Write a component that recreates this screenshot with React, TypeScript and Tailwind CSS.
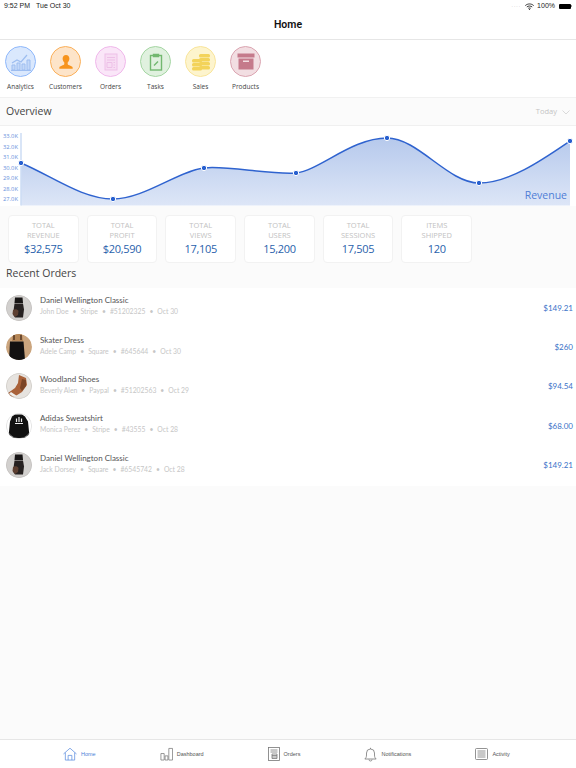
const font = "[font-family:'Open_Sans',sans-serif]";

function Circle({ border, bg, children }: { border: string; bg: string; children: React.ReactNode }) {
  return (
    <div className={`flex h-[31px] w-[31px] items-center justify-center rounded-full border ${border} ${bg}`}>
      {children}
    </div>
  );
}

const shortcuts = [
  {
    label: "Analytics", border: "border-[#8fb8fb]", bg: "bg-[#dae8fd]",
    icon: (
      <svg width="22" height="20" viewBox="0 0 22 20" fill="#c3d8f8" stroke="#9dbdf0" strokeWidth="1">
        <path d="M2 18v-5h3v5zM7 18v-7h3v7zM12 18v-6h3v6zM17 18V8h3v10zM1 18.500h20" />
        <path d="M2 11l5-3 4 2 6-7" strokeWidth="1.200" fill="none" />
      </svg>
    ),
  },
  {
    label: "Customers", border: "border-[#fbb05a]", bg: "bg-[#fde4c9]",
    icon: (
      <svg width="16" height="18" viewBox="0 0 18 18" fill="#f7941d">
        <path d="M9 1c2.400 0 3.800 1.800 3.800 4.200 0 1.900-.9 3.600-1.900 4.400v1.600c0 .8 1.300 1.200 3 1.900 1.400.6 2.600 1 2.600 2.400v1H1.500v-1c0-1.400 1.200-1.800 2.600-2.400 1.700-.7 3-1.100 3-1.900V9.600C6.100 8.800 5.200 7.100 5.200 5.200 5.200 2.800 6.600 1 9 1z" />
      </svg>
    ),
  },
  {
    label: "Orders", border: "border-[#f0b8eb]", bg: "bg-[#fae6f8]",
    icon: (
      <svg width="14" height="18" viewBox="0 0 14 18" fill="none" stroke="#edc0e7" strokeWidth="1">
        <rect x="1" y="1" width="12" height="16" fill="#f7dcf3" />
        <path d="M3 4.500h8M3 7h8M3 9.500h5v5H3zM9.500 9.500H11M9.500 12H11M9.500 14.500H11" />
      </svg>
    ),
  },
  {
    label: "Tasks", border: "border-[#a5d6a3]", bg: "bg-[#e0f1df]",
    icon: (
      <svg width="14" height="18" viewBox="0 0 14 18" fill="none" stroke="#72b870" strokeWidth="1.400">
        <rect x="1.500" y="2.500" width="11" height="14.500" />
        <path d="M4.500 1.500h5v2h-5zM5 12.500l4-4" />
      </svg>
    ),
  },
  {
    label: "Sales", border: "border-[#f9e59c]", bg: "bg-[#fdf4cd]",
    icon: (
      <svg width="20" height="18" viewBox="0 0 20 18" fill="#f3d35a">
        <rect x="8" y="1" width="11" height="3.500" rx="1.500" />
        <rect x="8" y="5" width="11" height="3.500" rx="1.500" />
        <rect x="8" y="9" width="11" height="3.500" rx="1.500" />
        <rect x="8" y="13" width="11" height="3.500" rx="1.500" />
        <rect x="1" y="6" width="10" height="3.500" rx="1.500" />
        <rect x="1" y="10" width="10" height="3.500" rx="1.500" />
        <rect x="1" y="14" width="10" height="3.500" rx="1.500" />
      </svg>
    ),
  },
  {
    label: "Products", border: "border-[#dba5b1]", bg: "bg-[#f2dee2]",
    icon: (
      <svg width="18" height="17" viewBox="0 0 18 17" fill="#c57a8b">
        <rect x="0.500" y="0.500" width="17" height="4" />
        <path d="M1.500 5.500h15V16.500h-15zM6 7.500v1.500h6V7.500z" fillRule="evenodd" />
      </svg>
    ),
  },
];

const stats = [
  ["TOTAL", "REVENUE", "$32,575"],
  ["TOTAL", "PROFIT", "$20,590"],
  ["TOTAL", "VIEWS", "17,105"],
  ["TOTAL", "USERS", "15,200"],
  ["TOTAL", "SESSIONS", "17,505"],
  ["ITEMS", "SHIPPED", "120"],
];

function Avatar({ kind }: { kind: number }) {
  const common = "h-[26px] w-[26px] shrink-0 rounded-full";
  if (kind === 0)
    return (
      <svg className={common} viewBox="0 0 26 26">
        <circle cx="13" cy="13" r="13" fill="#d2d0ce" />
        <path d="M9 2.500h7.500l.5 5.500H8.500z" fill="#171515" />
        <path d="M8.500 8.500h8.500l1 6-1 8H9l-2-3z" fill="#262121" />
        <path d="M7 15c2-1.500 4.500-1 5.500 1l-.5 4-3 2-2.500-3z" fill="#5d3f31" />
        <circle cx="13" cy="13" r="12.700" fill="none" stroke="#bdbbb9" strokeWidth=".6" />
      </svg>
    );
  if (kind === 1)
    return (
      <svg className={common} viewBox="0 0 26 26">
        <circle cx="13" cy="13" r="13" fill="#cba57e" />
        <path d="M7 0h9l1 7H6z" fill="#b58657" />
        <path d="M4 7.500h13.500l1.500 18.500H3z" fill="#131111" />
        <path d="M7 1h2v5H7zM14 1h2v5h-2z" fill="#6b4a30" />
      </svg>
    );
  if (kind === 2)
    return (
      <svg className={common} viewBox="0 0 26 26">
        <circle cx="13" cy="13" r="13" fill="#e6e3df" />
        <path d="M13 2l7 3 1 7-5 7-8 5-5-1-1-3 7-5 3-5z" fill="#a9623a" />
        <path d="M16 6l4 1v6l-4 5-2-3z" fill="#7a4426" />
        <path d="M3 21l5 3 3-1-6-4z" fill="#f0efec" />
        <circle cx="13" cy="13" r="12.700" fill="none" stroke="#c2bfbb" strokeWidth=".6" />
      </svg>
    );
  return (
    <svg className={common} viewBox="0 0 26 26">
      <circle cx="13" cy="13" r="13" fill="#ffffff" />
      <path d="M9 1.500h7l3 2 3 5 1.500 15h-3.500l-.5 1.500H6.500L6 23.500H2.500L4 8.500l2-5z" fill="#111" />
      <path d="M13 4v5M10.500 5.500v3.500M15.500 5.500v3.500M9 10.500h8" stroke="#eee" strokeWidth="1.200" />
      <circle cx="13" cy="13" r="12.700" fill="none" stroke="#cfcfcf" strokeWidth=".6" />
    </svg>
  );
}

const orders = [
  [0, "Daniel Wellington Classic", ["John Doe", "Stripe", "#51202325", "Oct 30"], "$149.21"],
  [1, "Skater Dress", ["Adele Camp", "Square", "#645644", "Oct 30"], "$260"],
  [2, "Woodland Shoes", ["Beverly Alen", "Paypal", "#51202563", "Oct 29"], "$94.54"],
  [3, "Adidas Sweatshirt", ["Monica Perez", "Stripe", "#43555", "Oct 28"], "$68.00"],
  [0, "Daniel Wellington Classic", ["Jack Dorsey", "Square", "#6545742", "Oct 28"], "$149.21"],
] as const;

const tabs = [
  {
    label: "Home", active: true,
    icon: (
      <svg width="14" height="14" viewBox="0 0 15 14" fill="none" stroke="#5b8ddf" strokeWidth=".8">
        <path d="M.5 7L7.500.8 14.500 7M2.500 5.500V13.500h10V5.500M5.500 13.500V8.500h4v5" />
      </svg>
    ),
  },
  {
    label: "Dashboard",
    icon: (
      <svg width="13" height="14" viewBox="0 0 14 14" fill="none" stroke="#777" strokeWidth=".8">
        <path d="M1 6.500h3.500v7H1zM5.500 9h3v4.500h-3zM9.500 1h4v12.500h-4z" />
      </svg>
    ),
  },
  {
    label: "Orders",
    icon: (
      <svg width="12" height="14" viewBox="0 0 12 14" fill="none" stroke="#777" strokeWidth=".8">
        <rect x=".5" y=".5" width="11" height="13" />
        <path d="M2.500 3h7M2.500 5h7M4 7h5v4.500H4zM4 8.500h5M4 10h5" />
      </svg>
    ),
  },
  {
    label: "Notifications",
    icon: (
      <svg width="13" height="15" viewBox="0 0 13 15" fill="none" stroke="#777" strokeWidth=".8">
        <path d="M.8 12c1.200-1 1.700-2 1.700-4V6a4 4 0 0 1 8 0v2c0 2 .5 3 1.700 4zM5 12.500a1.500 1.500 0 0 0 3 0M6.500 2V.8" />
      </svg>
    ),
  },
  {
    label: "Activity",
    icon: (
      <svg width="13" height="12" viewBox="0 0 13 12" fill="none" stroke="#777" strokeWidth=".8">
        <rect x=".5" y=".5" width="12" height="11" rx="1" />
        <path d="M2.500 3h8M2.500 5h8M2.500 7h8M2.500 9h8" />
      </svg>
    ),
  },
];

const curve =
  "M21 163 C52 176 82 199 113 199 C144 199 178 171 204 168 C225 165 270 175 296 173 C320 170 352 138 387 138 C418 138 448 183 479 183 C510 183 545 158 570 141";
const points = [[21, 163], [113, 199], [204, 168], [296, 173], [387, 138], [479, 183], [570, 141]];
const ticks = ["33.0K", "32.0K", "31.0K", "30.0K", "29.0K", "28.0K", "27.0K"];

export default function App() {
  return (
    <div className={`flex h-[768px] w-[576px] flex-col overflow-hidden bg-[#fbfbfb] ${font}`}>
      <div className="flex h-[12px] items-center justify-between bg-white pl-[4px] pr-[4px] text-[7px] text-[#222] [font-family:'Liberation_Sans',sans-serif]">
        <div className="flex gap-[6px]">
          <span>9:52 PM</span>
          <span>Tue Oct 30</span>
        </div>
        <div className="flex items-center gap-[3px]">
          <span className="mr-[1px] text-[5px] tracking-[1px] text-[#bbb]">....</span>
          <svg width="9" height="7" viewBox="0 0 9 7" fill="none" stroke="#222" strokeWidth=".9">
            <path d="M.3 2.600C2.600.4 6.400.4 8.700 2.600M1.800 4C3.300 2.700 5.700 2.700 7.200 4M3.200 5.400c.7-.6 1.900-.6 2.600 0" />
            <circle cx="4.500" cy="6.300" r=".6" fill="#222" stroke="none" />
          </svg>
          <span>100%</span>
          <div className="ml-[1px] flex items-center">
            <div className="h-[5px] w-[12px] rounded-[1px] bg-black" />
            <div className="h-[2px] w-[1px] bg-[#999]" />
          </div>
        </div>
      </div>

      <div className="flex h-[28px] shrink-0 items-center justify-center border-b border-[#e6e6e6] bg-white pb-[1px] text-[10.500px] font-semibold text-[#111] [font-family:Roboto,sans-serif]">
        Home
      </div>

      <div className="flex h-[58px] shrink-0 gap-[14px] border-b border-[#f1f1f1] bg-white pl-[5px] pt-[6px]">
        {shortcuts.map((s) => (
          <div key={s.label} className="flex w-[31px] flex-col items-center">
            <Circle border={s.border} bg={s.bg}>{s.icon}</Circle>
            <span className="mt-[5px] whitespace-nowrap text-[6.500px] leading-[10px] text-[#444]">{s.label}</span>
          </div>
        ))}
      </div>

      <div className="flex h-[28px] shrink-0 items-center justify-between border-b border-[#f0f0f0] pl-[6px] pr-[6px] pt-[1px]">
        <span className="text-[10.500px] font-medium text-[#444]">Overview</span>
        <div className="flex items-center gap-[5px] text-[7.500px] text-[#c4c4c4]">
          <span>Today</span>
          <svg width="8" height="5" viewBox="0 0 8 5" fill="none" stroke="#ccc" strokeWidth=".7">
            <path d="M.5.500L4 4 7.500.5" />
          </svg>
        </div>
      </div>

      <div className="relative h-[80px] shrink-0 bg-white">
        <svg width="576" height="80" viewBox="0 126 576 80" className="block">
          <defs>
            <linearGradient id="area" x1="0" y1="0" x2="0" y2="1">
              <stop offset="0" stopColor="#b6c9ec" />
              <stop offset="1" stopColor="#dde6f7" />
            </linearGradient>
          </defs>
          <path d={`${curve} L570 205.500 L21 205.500 Z`} fill="url(#area)" />
          <path d="M21 133V205.500" stroke="#cddcf5" strokeWidth="1.500" />
          <path d={curve} fill="none" stroke="#2f63cf" strokeWidth="1.500" />
          {points.map(([x, y]) => (
            <circle key={x} cx={x} cy={y} r="2.700" fill="#2860cf" stroke="#fff" strokeWidth="1" />
          ))}
          {ticks.map((t, i) => (
            <text key={t} x="18" y={138.300 + i * 10.500} textAnchor="end" fontSize="5.800" fill="#668fdc" fontFamily="'Open Sans', sans-serif">
              {t}
            </text>
          ))}
        </svg>
        <span className="absolute bottom-[4px] right-[9px] text-[10.500px] leading-[14px] text-[#4f7ed6]">Revenue</span>
      </div>

      <div className="flex h-[57px] shrink-0 gap-[8px] pl-[8px] pt-[9px]">
        {stats.map(([a, b, v]) => (
          <div key={b} className="flex h-[48px] w-[70.700px] flex-col items-center rounded-[4px] border border-[#f2f2f2] bg-white pt-[5px]">
            <span className="text-[7.500px] leading-[9.500px] text-[#c2c2c2]">{a}</span>
            <span className="text-[7.500px] leading-[9.500px] text-[#c2c2c2]">{b}</span>
            <span className="mt-[1px] text-[11px] font-medium leading-[16px] tracking-[-0.3px] text-[#2a62ac]">{v}</span>
          </div>
        ))}
      </div>

      <div className="h-[25px] shrink-0 px-[6px] text-[10.500px] font-medium leading-[20px] text-[#444]">
        Recent Orders
      </div>

      <div className="h-[198px] shrink-0 bg-white [font-family:Lato,sans-serif]">
        {orders.map(([kind, name, meta, price], i) => (
          <div key={i} className="flex h-[39.400px] items-center pl-[6px] pr-[3px]">
            <Avatar kind={kind} />
            <div className="mb-[3px] ml-[8px] flex-1">
              <div className="text-[8px] leading-[11px] text-[#555]">{name}</div>
              <div className="flex gap-[4px] text-[6.800px] leading-[11px] text-[#c6c6c6]">
                {meta.map((m, j) => (
                  <span key={m} className="flex gap-[4px]">
                    {j > 0 && <span>•</span>}
                    <span>{m}</span>
                  </span>
                ))}
              </div>
            </div>
            <span className="text-[8px] text-[#3a72c8]">{price}</span>
          </div>
        ))}
      </div>

      <div className="flex-1" />

      <div className="flex h-[29px] shrink-0 items-center gap-[64px] border-t border-[#e6e6e6] bg-white pl-[63px] text-[5.500px] font-medium text-[#555] [font-family:'Liberation_Sans',sans-serif]">
        {tabs.map((t) => (
          <div key={t.label} className="flex items-center gap-[4px]">
            {t.icon}
            <span className={t.active ? "text-[#4d80d8]" : ""}>{t.label}</span>
          </div>
        ))}
      </div>
    </div>
  );
}
